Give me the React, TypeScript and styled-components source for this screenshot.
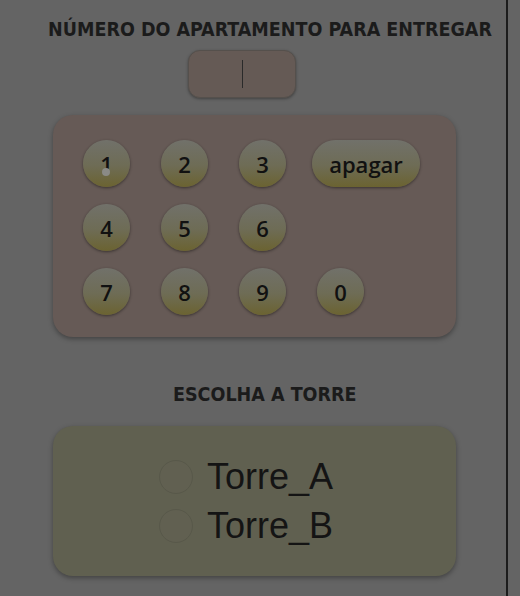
import React from 'react';
import styled, { createGlobalStyle } from 'styled-components';

const GlobalStyle = createGlobalStyle`
  html, body {
    margin: 0;
    padding: 0;
    background: #646464;
  }
`;

const Page = styled.div`
  width: 508px;
  min-height: 596px;
  box-sizing: border-box;
  border-right: 2px solid #1c1c1c;
  background: #646464;
  display: flex;
  flex-direction: column;
  align-items: flex-start;
  padding-top: 18px;
`;

interface TitleProps {
  indent: number;
  top?: number;
}

const Title = styled.h2<TitleProps>`
  margin: ${({ top }) => top ?? 0}px 0 0 ${({ indent }) => indent}px;
  font-family: 'DejaVu Sans Condensed', 'DejaVu Sans', sans-serif;
  font-stretch: condensed;
  font-weight: bold;
  font-size: 19.5px;
  line-height: 24px;
  color: #1b1b1b;
  white-space: nowrap;
`;

const Display = styled.div`
  margin: 8px 0 0 188px;
  width: 108px;
  height: 48px;
  box-sizing: border-box;
  border-radius: 12px;
  border: 1px solid #55504c;
  background: #655a55;
  box-shadow: 0 1px 3px rgba(0, 0, 0, 0.35);
  display: flex;
  align-items: center;
  justify-content: center;
`;

const Caret = styled.span`
  width: 1px;
  height: 28px;
  background: #2a2a2a;
`;

const Panel = styled.div<{ tone: string }>`
  margin: 17px 0 0 53px;
  width: 403px;
  box-sizing: border-box;
  border-radius: 20px;
  background: ${({ tone }) => tone};
  box-shadow: 0 2px 5px rgba(0, 0, 0, 0.35);
`;

const Keypad = styled.div`
  display: grid;
  grid-template-columns: 47px 47px 47px auto;
  grid-auto-rows: 47px;
  column-gap: 31px;
  row-gap: 17px;
  padding: 25px 30px 22px;
`;

const Key = styled.button<{ wide?: boolean }>`
  position: relative;
  width: ${({ wide }) => (wide ? '108px' : '47px')};
  height: 47px;
  margin-left: ${({ wide }) => (wide ? '-5px' : '0')};
  padding: 0;
  border: none;
  border-radius: 24px;
  background: linear-gradient(to bottom, #71716a 0%, #6e6c55 55%, #6b6331 100%);
  box-shadow: 0 1px 3px rgba(0, 0, 0, 0.45);
  font-family: 'Open Sans', sans-serif;
  font-weight: 600;
  font-size: 22px;
  color: #111;
  display: flex;
  align-items: center;
  justify-content: center;
  cursor: pointer;
`;

const Touch = styled.span`
  position: absolute;
  left: 19px;
  top: 28px;
  width: 8px;
  height: 8px;
  border-radius: 50%;
  background: #8a8a86;
`;

const Towers = styled.div`
  padding: 26px 0 26px 106px;
  display: flex;
  flex-direction: column;
`;

const Option = styled.label`
  height: 49px;
  display: flex;
  align-items: center;
  gap: 14px;
  font-family: 'Liberation Sans', Arial, sans-serif;
  font-size: 36px;
  color: #141414;
`;

const Radio = styled.span`
  width: 34px;
  height: 34px;
  box-sizing: border-box;
  border-radius: 50%;
  border: 1px solid #58584a;
  background: #616051;
`;

const keys = ['1', '2', '3', 'apagar', '4', '5', '6', '', '7', '8', '9', '0'];

export default function App() {
  return (
    <>
      <GlobalStyle />
      <Page>
        <Title indent={48}>NÚMERO DO APARTAMENTO PARA ENTREGAR</Title>
        <Display>
          <Caret />
        </Display>
        <Panel tone="#665a56">
          <Keypad>
            {keys.map((k, i) =>
              k === '' ? (
                <span key={i} />
              ) : (
                <Key key={i} wide={k === 'apagar'}>
                  {k}
                  {k === '1' && <Touch />}
                </Key>
              )
            )}
          </Keypad>
        </Panel>
        <Title indent={173} top={46}>ESCOLHA A TORRE</Title>
        <Panel tone="#606050" style={{ marginTop: 19 }}>
          <Towers>
            <Option>
              <Radio />
              Torre_A
            </Option>
            <Option>
              <Radio />
              Torre_B
            </Option>
          </Towers>
        </Panel>
      </Page>
    </>
  );
}
